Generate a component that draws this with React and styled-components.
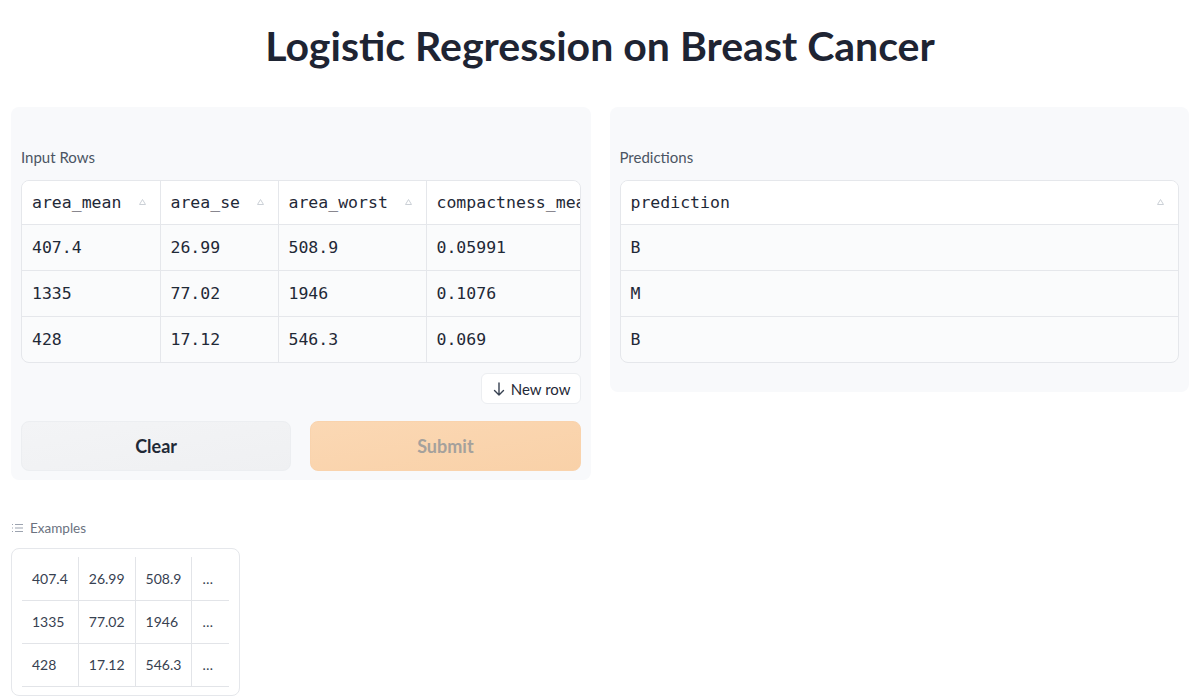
import React from "react";
import styled, { createGlobalStyle } from "styled-components";

const Global = createGlobalStyle`
  html, body { margin: 0; padding: 0; background: #ffffff; }
  body { font-family: Lato, "Noto Sans", sans-serif; color: #1f2937; }
  * { box-sizing: border-box; }
`;

const Page = styled.div`
  width: 1200px;
  padding: 0 11px 0 11px;
`;

const Title = styled.h1`
  margin: 0;
  padding-top: 24px;
  height: 107px;
  text-align: center;
  font-size: 41px;
  font-weight: 700;
  line-height: 44px;
  color: #1e2433;
`;

const Columns = styled.div`
  display: flex;
  gap: 19px;
  align-items: flex-start;
`;

const Panel = styled.div`
  flex: 1 1 0;
  min-width: 0;
  background: #f8f9fb;
  border-radius: 8px;
  padding: 40px 10px ${(p) => p.$pb || 9}px;
`;

const Label = styled.div`
  font-size: 15px;
  color: #4b5563;
  line-height: 20px;
  margin-bottom: 13px;
`;

const TableWrap = styled.div`
  border: 1px solid #e5e7eb;
  border-radius: 8px;
  overflow: hidden;
  background: #fafbfc;
`;

const Table = styled.table`
  border-collapse: collapse;
  table-layout: fixed;
  width: ${(p) => p.$w || "100%"};
  font-family: "DejaVu Sans Mono", "Liberation Mono", monospace;
  font-size: 16.5px;
  color: #1f2937;
`;

const Th = styled.th`
  height: 43px;
  background: #ffffff;
  font-weight: 400;
  text-align: left;
  padding: 0 10px;
  border-right: 1px solid #e5e7eb;
  border-bottom: 1px solid #e5e7eb;
  white-space: nowrap;
  overflow: hidden;
  &:last-child { border-right: none; }
`;

const ThInner = styled.div`
  display: flex;
  align-items: center;
  justify-content: space-between;
`;

const HeadText = styled.span`
  white-space: nowrap;
`;

const Td = styled.td`
  height: 46px;
  padding: 0 10px;
  border-right: 1px solid #e5e7eb;
  border-bottom: 1px solid #e5e7eb;
  white-space: nowrap;
  overflow: hidden;
  &:last-child { border-right: none; }
  tr:last-child > & { border-bottom: none; }
`;

const ActionRow = styled.div`
  display: flex;
  justify-content: flex-end;
  margin-top: 10px;
`;

const SmallButton = styled.button`
  height: 31px;
  padding: 0 9px 0 11px;
  background: #ffffff;
  border: 1px solid #eceef1;
  border-radius: 6px;
  font-family: Lato, "Noto Sans", sans-serif;
  font-size: 15px;
  color: #1f2937;
  display: flex;
  align-items: center;
  gap: 6px;
`;

const ButtonRow = styled.div`
  display: grid;
  grid-template-columns: 1fr 1fr;
  gap: 19px;
  margin-top: 17px;
`;

const BigButton = styled.button`
  height: 50px;
  border-radius: 8px;
  border: 1px solid ${(p) => (p.$primary ? "#f9d3ad" : "#eceef1")};
  background: ${(p) =>
    p.$primary
      ? "linear-gradient(to bottom right, #fbd8b4, #f9d1a8)"
      : "linear-gradient(to bottom right, #f3f4f6, #eff0f2)"};
  font-family: Lato, "Noto Sans", sans-serif;
  font-size: 18px;
  font-weight: 700;
  color: ${(p) => (p.$primary ? "#a5a19c" : "#1f2937")};
`;

const ExamplesHeader = styled.div`
  display: flex;
  align-items: center;
  gap: 7px;
  margin-top: 39px;
  padding-left: 1px;
  font-size: 13.5px;
  color: #6b7280;
  height: 18px;
`;

const ExamplesBox = styled.div`
  margin-top: 11px;
  width: 229px;
  border: 1px solid #e5e7eb;
  border-radius: 8px;
  padding: 8px 10px 8px 10px;
`;

const ExTable = styled.table`
  border-collapse: collapse;
  font-size: 14px;
  color: #374151;
`;

const ExTd = styled.td`
  height: 43px;
  padding: 0 10px;
  border-right: 1px solid #e2e4e8;
  border-bottom: 1px solid #e2e4e8;
  white-space: nowrap;
  &:last-child { border-right: none; padding-right: 16px; }
`;

const inputCols = [
  { name: "area_mean", w: 138 },
  { name: "area_se", w: 118 },
  { name: "area_worst", w: 148 },
  { name: "compactness_mean", w: 190 },
];

const rows = [
  ["407.4", "26.99", "508.9", "0.05991"],
  ["1335", "77.02", "1946", "0.1076"],
  ["428", "17.12", "546.3", "0.069"],
];

const preds = ["B", "M", "B"];

function SortIcon() {
  return (
    <svg width="7" height="6" viewBox="0 0 7 6" style={{ marginRight: 4, flexShrink: 0 }}>
      <path d="M3.5 0.5L6.5 5.5H0.5Z" fill="none" stroke="#cbd0d6" strokeWidth="1" />
    </svg>
  );
}

function ListIcon() {
  return (
    <svg width="11" height="10" viewBox="0 0 11 10" fill="none" stroke="#9ca3af" strokeWidth="1">
      <path d="M0 1.5h1M0 5h1M0 8.5h1M3 1.5h8M3 5h8M3 8.5h8" />
    </svg>
  );
}

function DownArrow() {
  return (
    <svg width="12" height="14" viewBox="0 0 12 14" fill="none" stroke="#374151" strokeWidth="1.4" strokeLinecap="round" strokeLinejoin="round">
      <path d="M6 1v12M1.5 8.5L6 13l4.5-4.5" />
    </svg>
  );
}

export default function App() {
  return (
    <>
      <Global />
      <Page>
        <Title>Logistic Regression on Breast Cancer</Title>
        <Columns>
          <Panel>
            <Label>Input Rows</Label>
            <TableWrap>
              <Table $w="594px">
                <colgroup>
                  {inputCols.map((c) => (
                    <col key={c.name} style={{ width: c.w }} />
                  ))}
                </colgroup>
                <thead>
                  <tr>
                    {inputCols.map((c) => (
                      <Th key={c.name}>
                        <ThInner>
                          <HeadText>{c.name}</HeadText>
                          <SortIcon />
                        </ThInner>
                      </Th>
                    ))}
                  </tr>
                </thead>
                <tbody>
                  {rows.map((r, i) => (
                    <tr key={i}>
                      {r.map((v, j) => (
                        <Td key={j}>{v}</Td>
                      ))}
                    </tr>
                  ))}
                </tbody>
              </Table>
            </TableWrap>
            <ActionRow>
              <SmallButton>
                <DownArrow />
                New row
              </SmallButton>
            </ActionRow>
            <ButtonRow>
              <BigButton>Clear</BigButton>
              <BigButton $primary>Submit</BigButton>
            </ButtonRow>
          </Panel>
          <Panel $pb={29}>
            <Label>Predictions</Label>
            <TableWrap>
              <Table>
                <thead>
                  <tr>
                    <Th>
                      <ThInner>
                        <HeadText>prediction</HeadText>
                        <SortIcon />
                      </ThInner>
                    </Th>
                  </tr>
                </thead>
                <tbody>
                  {preds.map((p, i) => (
                    <tr key={i}>
                      <Td>{p}</Td>
                    </tr>
                  ))}
                </tbody>
              </Table>
            </TableWrap>
          </Panel>
        </Columns>
        <ExamplesHeader>
          <ListIcon />
          Examples
        </ExamplesHeader>
        <ExamplesBox>
          <ExTable>
            <tbody>
              {rows.map((r, i) => (
                <tr key={i}>
                  <ExTd>{r[0]}</ExTd>
                  <ExTd>{r[1]}</ExTd>
                  <ExTd>{r[2]}</ExTd>
                  <ExTd>…</ExTd>
                </tr>
              ))}
            </tbody>
          </ExTable>
        </ExamplesBox>
      </Page>
    </>
  );
}
